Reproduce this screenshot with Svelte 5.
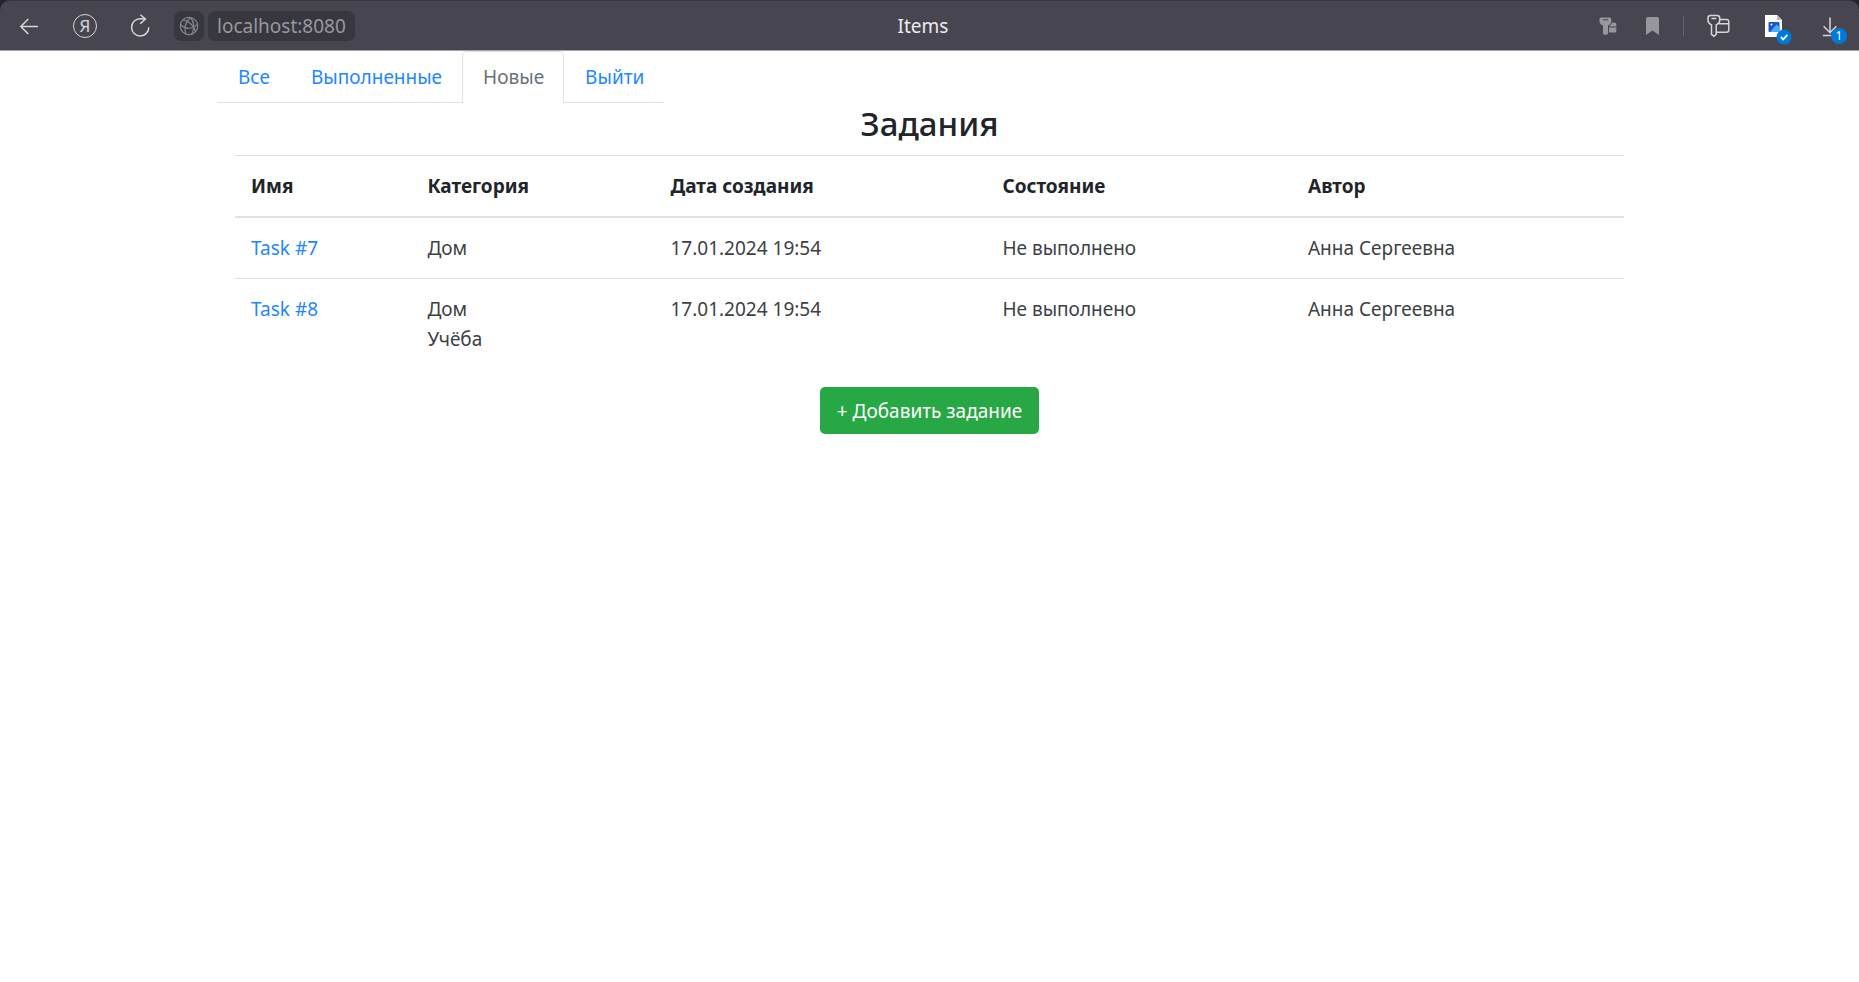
<script>
  const tabs = ['Все', 'Выполненные', 'Новые', 'Выйти'];
  let active = $state('Новые');

  const columns = ['Имя', 'Категория', 'Дата создания', 'Состояние', 'Автор'];
  const tasks = [
    { name: 'Task #7', categories: ['Дом'], created: '17.01.2024 19:54', state: 'Не выполнено', author: 'Анна Сергеевна' },
    { name: 'Task #8', categories: ['Дом', 'Учёба'], created: '17.01.2024 19:54', state: 'Не выполнено', author: 'Анна Сергеевна' }
  ];
</script>

<div class="frame">
  <header class="toolbar">
    <div class="group start">
      <button class="tool" aria-label="Назад">
        <svg viewBox="0 0 32 32" class="line"><path d="M25 16.5H7.8M15.3 9L7.8 16.5L15.3 24" /></svg>
      </button>
      <button class="tool"><span class="ya">Я</span></button>
      <button class="tool" aria-label="Обновить">
        <svg viewBox="0 0 32 32" class="line"><path d="M23.8 17.2A8.6 8.6 0 1 1 15.2 8.8H20.3M15.4 4.8L20.4 9L15.2 13.8" /></svg>
      </button>
      <div class="address">
        <button class="chip site" aria-label="Сведения о сайте">
          <svg viewBox="0 0 20 20" class="globe">
            <circle cx="10" cy="10" r="8.7" />
            <path d="M11.5 1.5C7.5 5 5 11 6.5 18M11.5 1.5C15 5.5 15.5 12 13 18M1.4 8.5C6 13.5 14 13.5 18 8.5M4 4C8.5 4.5 14.5 8.5 16.5 15.5" />
          </svg>
        </button>
        <button class="chip host">localhost:8080</button>
      </div>
    </div>

    <div class="title">Items</div>

    <div class="group end">
      <button class="tool" aria-label="Пароли сайта">
        <svg viewBox="0 0 32 32" class="solid">
          <path fill-rule="evenodd" d="M9 7.5H17.5Q19.3 7.5 19.3 9.5V11.5Q19.3 14 16 15.5V24L13.4 25L11 24V15.5Q7.5 14 7.5 11.5V9.5Q7.5 7.5 9 7.5ZM11 9.3V10.3H16V9.3Z" />
          <path d="M17 16.5L20.5 12.5H22.5Q24.3 12.5 24.3 14.2V16.5ZM17 17.5H24.3V21Q24.3 22.5 22.8 22.5H17Z" />
        </svg>
      </button>
      <button class="tool bookmark" aria-label="Закладка">
        <svg viewBox="0 0 32 32" class="solid"><path d="M12 7H21Q23 7 23 9V25L16.5 20.5L10 25V9Q10 7 12 7Z" /></svg>
      </button>
      <span class="divider"></span>
      <button class="tool" aria-label="Менеджер паролей">
        <svg viewBox="0 0 32 32" class="line">
          <path d="M8.5 5.5H15Q17.7 5.5 17.7 8V10.5Q17.7 13 14.2 14.8V24.3L11.8 26.3L9.5 24.3V14.8Q6 13 6 10.5V8Q6 5.5 8.5 5.5ZM9.5 8.5H14.3" />
          <path d="M17.7 9.5H24.5Q26.8 9.5 26.8 11.7V20Q26.8 22.2 24.5 22.2H14.2M16.8 13.8H26.8" />
        </svg>
      </button>
      <button class="tool gap" aria-label="Документ">
        <svg viewBox="0 0 32 32">
          <path d="M7 5H19L24 10V27H7Z" fill="#ffffff" />
          <path d="M19 5L24 10H19Z" fill="#b9bac0" />
          <rect x="10.5" y="12" width="11" height="10" rx="1" fill="#1c57c8" />
          <path d="M12 22L18.5 14.5L21.5 17V22Z" fill="#45b0f5" />
          <circle cx="13.5" cy="14.5" r="1" fill="#ffffff" />
          <circle cx="26" cy="27" r="7.5" fill="#0079dc" />
          <path d="M22.8 27L25.2 29.4L29.4 24.8" fill="none" stroke="#ffffff" stroke-width="1.8" />
        </svg>
      </button>
      <button class="tool gap" aria-label="Загрузки: 1">
        <svg viewBox="0 0 32 32" class="line"><path d="M16 7.5V22.8M9.6 16.3L16 22.8L22.4 16.3M8.8 25.5H18" /></svg>
        <span class="badge">1</span>
      </button>
    </div>
  </header>
</div>

<main class="container">
  <nav class="tabs">
    {#each tabs as tab}
      <a href="#{tab}" class:active={active === tab} onclick={() => (active = tab)}>{tab}</a>
    {/each}
  </nav>

  <section class="content">
    <h1>Задания</h1>
    <table>
      <colgroup>
        <col class="c-name" /><col class="c-category" /><col class="c-date" /><col class="c-state" /><col class="c-author" />
      </colgroup>
      <thead>
        <tr>{#each columns as column}<th scope="col">{column}</th>{/each}</tr>
      </thead>
      <tbody>
        {#each tasks as task}
          <tr>
            <td><a href="#{task.name}">{task.name}</a></td>
            <td>{#each task.categories as category}<div>{category}</div>{/each}</td>
            <td>{task.created}</td>
            <td>{task.state}</td>
            <td>{task.author}</td>
          </tr>
        {/each}
      </tbody>
    </table>
    <button class="add">+ Добавить задание</button>
  </section>
</main>

<style>
  :global(body) {
    margin: 0;
    background: #ffffff;
    color: #212529;
    font: 19px/30px "Noto Sans", "Open Sans", sans-serif;
  }
  button {
    font: inherit;
    border: 0;
    padding: 0;
    background: none;
    cursor: pointer;
  }
  a {
    color: #1f87ff;
    text-decoration: none;
  }

  .frame {
    background: #24232c;
  }
  .toolbar {
    display: grid;
    grid-template-columns: 1fr auto 1fr;
    align-items: center;
    height: 51px;
    box-sizing: border-box;
    padding-right: 13px;
    background: #474650;
    border-top: 1px solid #3a3942;
    border-bottom: 1px solid #a3a2a7;
    border-radius: 10px 10px 0 0;
  }
  .group {
    display: flex;
    align-items: center;
  }
  .start {
    gap: 24px;
    padding-left: 13px;
  }
  .end {
    justify-content: flex-end;
  }
  .tool {
    position: relative;
    display: flex;
    align-items: center;
    justify-content: center;
    width: 32px;
    height: 32px;
    color: #d6d6d9;
  }
  .tool svg {
    width: 32px;
    height: 32px;
    overflow: visible;
  }
  .line {
    fill: none;
    stroke: #d6d6d9;
    stroke-width: 1.5;
  }
  .solid {
    fill: #97969c;
  }
  .ya {
    width: 22px;
    height: 22px;
    border: 1px solid #d6d6d9;
    border-radius: 50%;
    font-size: 17px;
    line-height: 22px;
    text-align: center;
  }
  .address {
    display: flex;
    gap: 4px;
    margin-left: -7px;
  }
  .chip {
    height: 30px;
    border-radius: 7px;
    background: #373740;
    color: #97979d;
  }
  .site {
    display: flex;
    align-items: center;
    justify-content: center;
    width: 30px;
  }
  .globe {
    width: 20px;
    height: 20px;
    fill: none;
    stroke: #85858c;
    stroke-width: 1.2;
  }
  .host {
    padding: 0 9px;
  }
  .title {
    color: #ececee;
  }
  .bookmark {
    margin-left: 12px;
  }
  .divider {
    width: 1px;
    height: 20px;
    margin: 0 18px 0 15px;
    background: #64636c;
  }
  .gap {
    margin-left: 24px;
  }
  .badge {
    position: absolute;
    left: 17px;
    top: 18px;
    width: 16px;
    height: 16px;
    border-radius: 50%;
    background: #0079dc;
    color: #ffffff;
    font-size: 12px;
    line-height: 16px;
    text-align: center;
  }

  .container {
    max-width: 1425px;
    margin: 0 auto;
  }
  .tabs {
    display: flex;
    width: fit-content;
  }
  .tabs a {
    padding: 11px 20px 10px 21px;
    border-bottom: 1px solid #dee2e6;
  }
  .tabs a.active {
    padding: 10px 19px 11px 20px;
    color: #6a7178;
    border: 1px solid #dee2e6;
    border-bottom: 0;
    border-radius: 5px 5px 0 0;
  }
  .content {
    padding: 0 18px;
    text-align: center;
  }
  h1 {
    margin: 0 0 10px;
    font-size: 33px;
    font-weight: 500;
    line-height: 42px;
  }
  table {
    width: 100%;
    margin-bottom: 18px;
    table-layout: fixed;
    border-collapse: collapse;
    text-align: left;
  }
  .c-name { width: 12.7%; }
  .c-category { width: 17.5%; }
  .c-date { width: 23.9%; }
  .c-state { width: 22%; }
  .c-author { width: 23.9%; }
  th,
  td {
    padding: 15px 16px;
    border-top: 1px solid #dee2e6;
    vertical-align: top;
  }
  th {
    font-weight: 700;
    border-bottom: 2px solid #dee2e6;
  }
  td {
    color: #3d4145;
  }
  .add {
    padding: 9px 17px 8px;
    border-radius: 5px;
    background: #28a745;
    color: #ffffff;
  }
</style>
